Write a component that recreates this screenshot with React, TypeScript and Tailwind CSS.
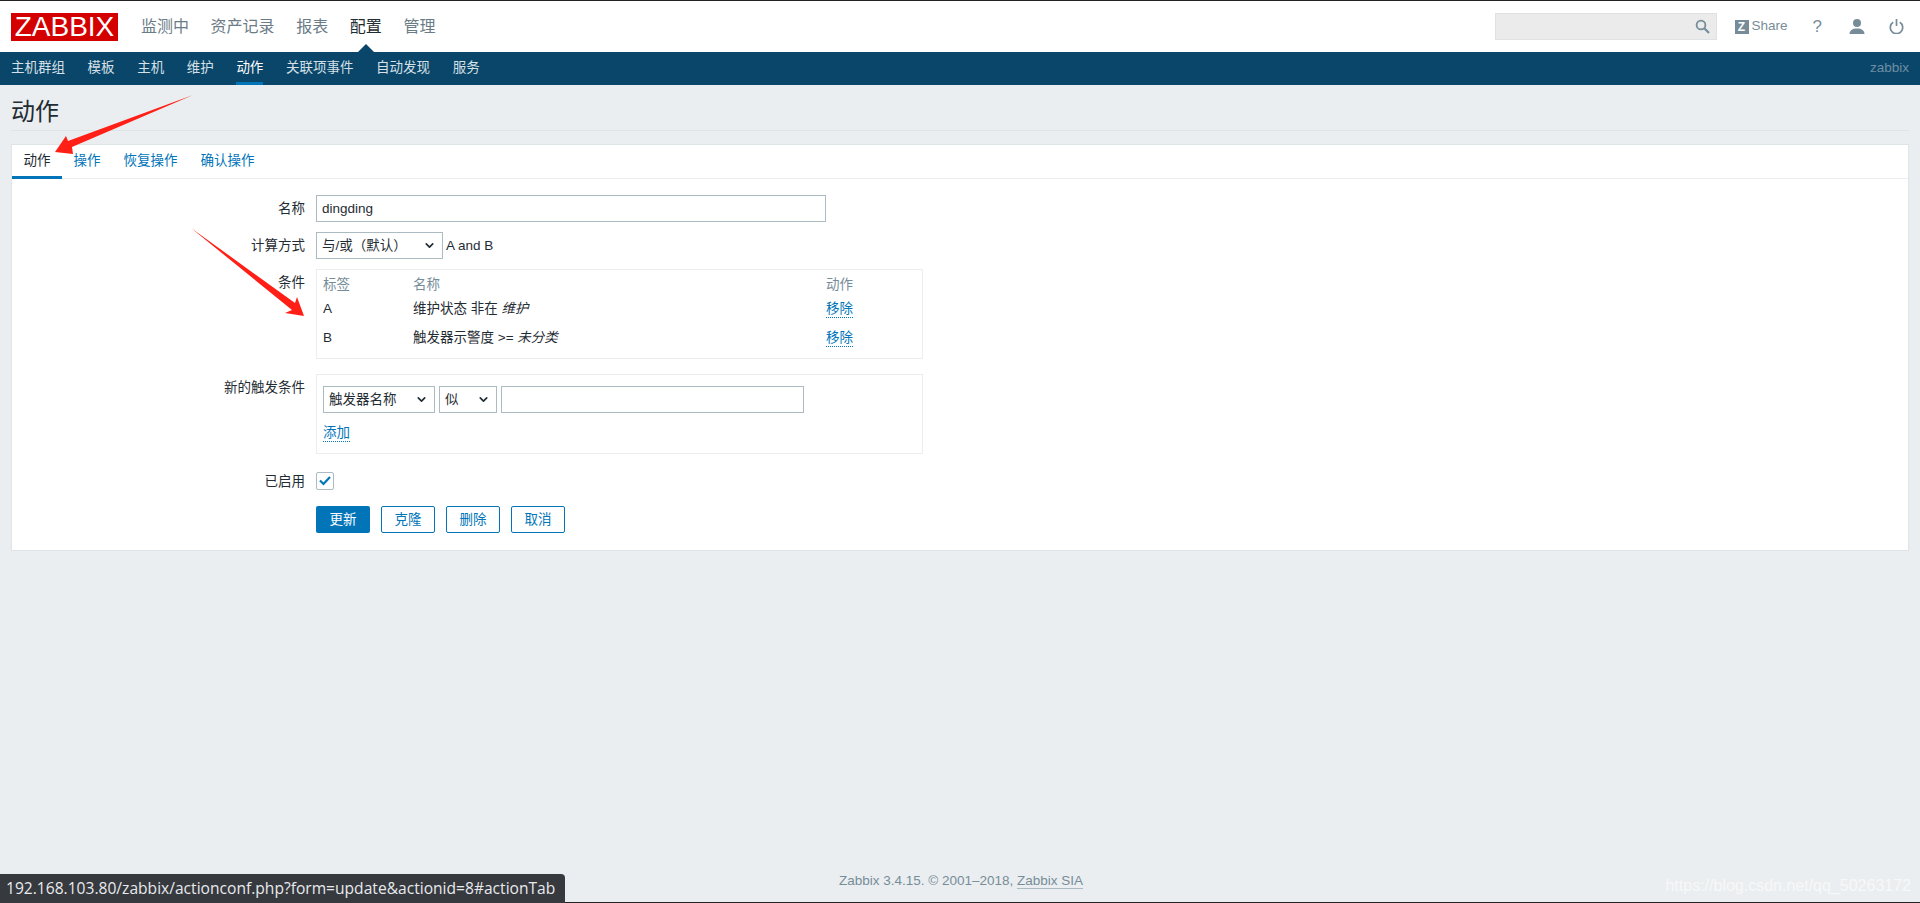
import { ChevronDown } from "lucide-react";

const FONT = "font-['Liberation_Sans','Noto_Sans_CJK_SC',sans-serif]";

const topMenu = ["监测中", "资产记录", "报表", "配置", "管理"];
const subMenu = ["主机群组", "模板", "主机", "维护", "动作", "关联项事件", "自动发现", "服务"];
const tabs = ["动作", "操作", "恢复操作", "确认操作"];

function Logo() {
  return (
    <div className="flex h-[28px] w-[107px] items-center justify-center bg-[#d40000] text-[28px] leading-none text-white">
      ZABBIX
    </div>
  );
}

function SearchIcon() {
  return (
    <svg width="15" height="15" viewBox="0 0 15 15" fill="none" stroke="#768d99" strokeWidth="1.8">
      <circle cx="6" cy="6" r="4.4" />
      <path d="M9.3 9.3 14 14" strokeWidth="2.2" />
    </svg>
  );
}

function UserIcon() {
  return (
    <svg width="16" height="15" viewBox="0 0 16 15" fill="#768d99">
      <circle cx="8" cy="4" r="4" />
      <path d="M0.5 15c0-3.5 3-5.5 7.5-5.5s7.5 2 7.5 5.5z" />
    </svg>
  );
}

function PowerIcon() {
  return (
    <svg width="15" height="15" viewBox="0 0 15 15" fill="none" stroke="#768d99" strokeWidth="1.7">
      <path d="M4.2 3.2a6.2 6.2 0 1 0 6.6 0" />
      <path d="M7.5 0v7" />
    </svg>
  );
}

function Header() {
  return (
    <header className="flex h-[51px] items-center bg-white pl-[11px] pr-[16px]">
      <Logo />
      <nav className="ml-[23px] flex gap-[21.6px] text-[16px] leading-none">
        {topMenu.map((item) => (
          <a key={item} className={item === "配置" ? "relative text-[#1f2c33]" : "text-[#6b7c87]"}>
            {item}
            {item === "配置" && (
              <span className="absolute left-1/2 top-[25px] h-0 w-0 -translate-x-1/2 border-x-[10px] border-b-[10px] border-x-transparent border-b-[#0a466a]" />
            )}
          </a>
        ))}
      </nav>
      <div className="ml-auto flex items-center">
        <div className="flex h-[27px] w-[222px] items-center justify-end border border-[#dfe1e3] bg-[#ebebeb] pr-[6px]">
          <SearchIcon />
        </div>
        <div className="ml-[18px] flex items-center gap-[3px] text-[13.5px] text-[#768d99]">
          <span className="flex h-[14px] w-[14px] items-center justify-center bg-[#768d99] text-[12px] font-bold leading-none text-white">
            Z
          </span>
          Share
        </div>
        <span className="ml-[25px] text-[17px] leading-none text-[#768d99]">?</span>
        <span className="ml-[27px] flex"><UserIcon /></span>
        <span className="ml-[24px] flex"><PowerIcon /></span>
      </div>
    </header>
  );
}

function SubNav() {
  return (
    <div className="flex h-[33px] items-center justify-between bg-[#0a466a] px-[11px] text-[13.5px]">
      <nav className="flex h-full gap-[22.6px]">
        {subMenu.map((item) => (
          <a
            key={item}
            className={
              item === "动作"
                ? "flex h-full items-center border-b-[3px] border-[#0275b8] pt-[3px] text-white"
                : "flex h-full items-center text-[#d5e0e7]"
            }
          >
            {item}
          </a>
        ))}
      </nav>
      <span className="text-[#6d8ea3]">zabbix</span>
    </div>
  );
}

function Label({ children }: { children: string }) {
  return <div className="w-[293px] pt-[2px] text-right text-[13.5px] text-[#1f2c33]">{children}</div>;
}

function Box({ className, children }: { className: string; children: React.ReactNode }) {
  return <div className={`w-[607px] border border-[#ebeef0] ${className}`}>{children}</div>;
}

function Select({ width, label }: { width: string; label: string }) {
  return (
    <div className={`flex h-[27px] items-center justify-between border border-[#acbbc2] bg-white pl-[5px] pr-[6px] text-[13.5px] text-[#1f2c33] ${width}`}>
      <span className="pt-px">{label}</span>
      <ChevronDown size={13} strokeWidth={3} color="#1f2c33" />
    </div>
  );
}

function ConditionRow({ tag, name, value }: { tag: string; name: string; value: string }) {
  return (
    <div className="flex h-[29px] items-center">
      <span className="w-[90px]">{tag}</span>
      <span className="w-[413px]">
        {name} <em>{value}</em>
      </span>
      <a className="border-b border-dotted border-[#0275b8] leading-[16px] text-[#0275b8]">移除</a>
    </div>
  );
}

function ActionForm() {
  const outline = "flex h-[27px] w-[54px] items-center justify-center rounded-[2px] border border-[#0275b8] bg-white pt-px text-[13.5px] text-[#0275b8]";
  return (
    <form className="pt-[16px]">
      <div className="flex">
        <div className="pt-[2px]"><Label>名称</Label></div>
        <div className="ml-[11px] flex h-[27px] w-[510px] items-center border border-[#acbbc2] pl-[5px] pt-px text-[13.5px] text-[#1f2c33]">
          dingding
        </div>
      </div>

      <div className="mt-[10px] flex items-center">
        <Label>计算方式</Label>
        <div className="ml-[11px]"><Select width="w-[127px]" label="与/或（默认）" /></div>
        <span className="ml-[3px] pt-px text-[13.5px] text-[#1f2c33]">A and B</span>
      </div>

      <div className="mt-[10px] flex">
        <div className="pt-[2px]"><Label>条件</Label></div>
        <div className="ml-[11px]">
          <Box className="h-[90px] px-[6px] pt-[5px] text-[13.5px] text-[#1f2c33]">
            <div className="flex h-[20px] items-center text-[#768d99]">
              <span className="w-[90px]">标签</span>
              <span className="w-[413px]">名称</span>
              <span>动作</span>
            </div>
            <ConditionRow tag="A" name="维护状态 非在" value="维护" />
            <ConditionRow tag="B" name="触发器示警度 >=" value="未分类" />
          </Box>
        </div>
      </div>

      <div className="mt-[15px] flex">
        <div className="pt-[2px]"><Label>新的触发条件</Label></div>
        <div className="ml-[11px]">
          <Box className="h-[80px] px-[6px] pt-[11px]">
            <div className="flex gap-[4px]">
              <Select width="w-[112px]" label="触发器名称" />
              <Select width="w-[58px]" label="似" />
              <div className="h-[27px] w-[303px] border border-[#acbbc2]" />
            </div>
            <a className="mt-[11px] inline-block border-b border-dotted border-[#0275b8] text-[13.5px] leading-[17px] text-[#0275b8]">添加</a>
          </Box>
        </div>
      </div>

      <div className="mt-[18px] flex h-[18px] items-center">
        <Label>已启用</Label>
        <span className="ml-[11px] flex h-[18px] w-[18px] items-center justify-center rounded-[2px] border border-[#acbbc2]">
          <svg width="12" height="10" viewBox="0 0 12 10" fill="none" stroke="#0275b8" strokeWidth="2.2">
            <path d="M1 4.5 4.5 8 11 1" />
          </svg>
        </span>
      </div>

      <div className="ml-[304px] mt-[16px] flex gap-[11px] pb-[17px]">
        <button type="button" className="flex h-[27px] w-[54px] items-center justify-center rounded-[2px] bg-[#0275b8] pt-px text-[13.5px] text-white">更新</button>
        <button type="button" className={outline}>克隆</button>
        <button type="button" className={outline}>删除</button>
        <button type="button" className={outline}>取消</button>
      </div>
    </form>
  );
}

function Annotations() {
  return (
    <svg className="pointer-events-none absolute left-0 top-0" width="320" height="330" fill="#ff1f16">
      <polygon points="193,95 68,141 66,136 55,152 73,154 72,147" />
      <polygon points="191,228 295,303 297,297 304,316 285,313 292,310" />
    </svg>
  );
}

export default function App() {
  return (
    <div className={`relative flex h-[903px] flex-col overflow-hidden bg-[#ebeef0] ${FONT}`}>
      <div className="h-px bg-[#222]" />
      <Header />
      <SubNav />

      <main className="px-[11px]">
        <h1 className="flex h-[46px] items-center border-b border-[#dfe4e7] pt-[9px] text-[24px] font-normal leading-none text-[#1f2c33]">
          动作
        </h1>
        <section className="mt-[13px] border border-[#dfe4e7] bg-white">
          <div className="flex h-[34px] border-b border-[#ebeef0] text-[13.5px]">
            {tabs.map((tab) => (
              <a
                key={tab}
                className={
                  tab === "动作"
                    ? "flex h-[34px] w-[50px] items-center justify-center border-b-[3px] border-[#0275b8] pt-[2px] text-[#1f2c33]"
                    : "flex h-[33px] items-center px-[11.5px] text-[#0275b8]"
                }
              >
                {tab}
              </a>
            ))}
          </div>
          <ActionForm />
        </section>
      </main>

      <footer className="mt-auto flex h-[48px] justify-center pt-[20px] text-[13.5px] leading-none text-[#768d99]">
        <span className="pl-[2px]">
          Zabbix 3.4.15. © 2001–2018,{" "}
          <a className="border-b border-[#acbbc2]">Zabbix SIA</a>
        </span>
      </footer>
      <div className="h-px bg-[#222]" />

      <Annotations />
      <span className="absolute bottom-[9px] right-[9px] text-[16px] leading-none text-[#f7f8f9]">
        https://blog.csdn.net/qq_50263172
      </span>
      <div className="absolute bottom-0 left-0 flex h-[29px] w-[565px] items-center rounded-tr-[4px] bg-[#36393e] pl-[6px] font-['Open_Sans',sans-serif] text-[15.6px] text-[#e8eaed]">
        192.168.103.80/zabbix/actionconf.php?form=update&amp;actionid=8#actionTab
      </div>
    </div>
  );
}
